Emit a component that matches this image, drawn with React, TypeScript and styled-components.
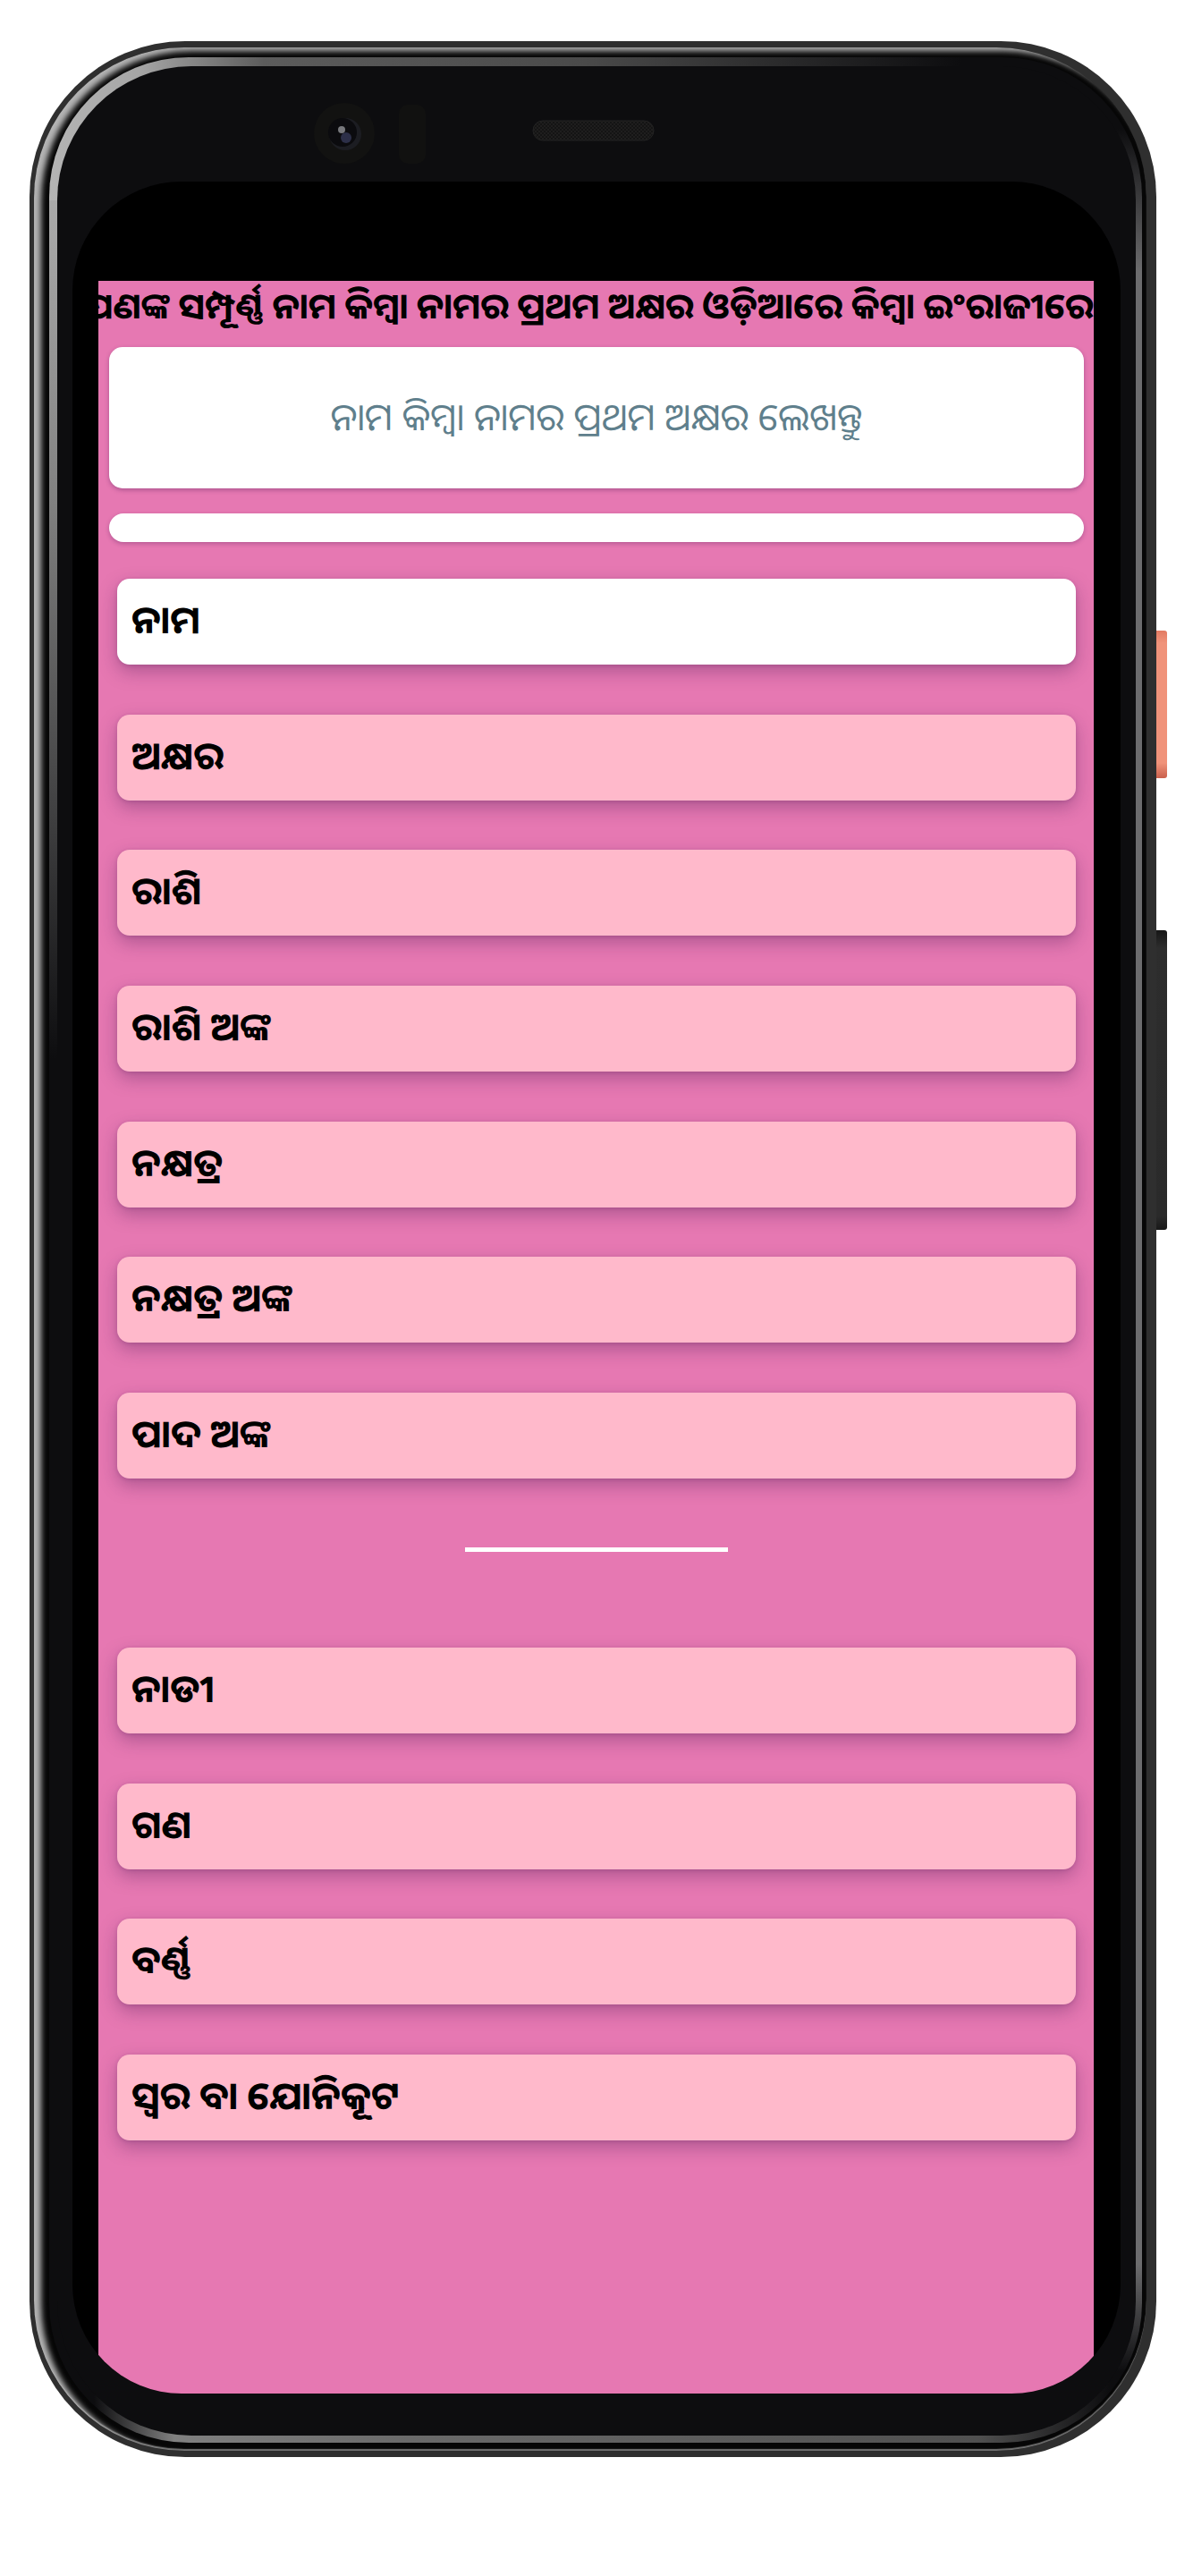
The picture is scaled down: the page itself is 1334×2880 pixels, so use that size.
import React from "react";
import styled, { createGlobalStyle } from "styled-components";

const Global = createGlobalStyle`
  * { box-sizing: border-box; }
  body { margin: 0; background: #fff; font-family: "Noto Sans Oriya", "Noto Sans", sans-serif; }
`;

const Page = styled.main`
  display: flex;
  justify-content: center;
  align-items: flex-start;
  padding: 46px 29px 133px 33px;
`;

const Edge = styled.div`
  flex: 1;
  min-width: 0;
  padding: 7px 11px 7px 5px;
  border-radius: 174px;
  background: #2f2f2f;
`;

const Chrome = styled.div`
  padding: 11px 5px 9px 17px;
  border-radius: 168px;
  background: #060606;
  box-shadow: inset 8px 4px 6px #b4b4b4, inset 0 -2px 1px #6e6e6e;
`;

/* Light reflected along the inner rim, fading out on each side. */
const Glint = styled.div`
  padding: 10px 7px 8px 9px;
  border-radius: 156px;
  background:
    linear-gradient(90deg, #b4b4b4 0, #a6a6a6 100px, #5c5c5c 240px, #4a4a4a 600px, transparent 1020px) left top / 100% 160px no-repeat,
    linear-gradient(90deg, transparent 50px, #808080 140px, #6a6a6a 400px, #505050 85%, transparent 97%) left bottom / 100% 100px no-repeat,
    linear-gradient(transparent 80px, #6c6c6e 240px, #6c6c6e calc(100% - 200px), transparent calc(100% - 80px)) right top / 100px 100% no-repeat,
    linear-gradient(#b4b4b4 0, #a6a6a6 200px, #808080 500px, transparent 1120px) left top / 160px 100% no-repeat,
    #0d0d0f;
`;

const Bezel = styled.div`
  padding: 129px 17px 47px 17px;
  border-radius: 150px;
  background: #0d0d0f;
  position: relative;
`;

const Screen = styled.div`
  padding: 111px 30px 0 29px;
  border-radius: 122px;
  background: #000;
  overflow: hidden;
`;

const Sensors = styled.svg`
  position: absolute;
  left: 280px;
  top: 30px;
  width: 440px;
  height: 100px;
`;

const SideKeys = styled.div`
  flex: none;
  display: flex;
  flex-direction: column;
  gap: 170px;
  width: 12px;
  padding-top: 659px;
`;

const SideKey = styled.div<{ $tall?: boolean }>`
  height: ${(p) => (p.$tall ? 335 : 165)}px;
  border-radius: 0 3px 3px 0;
  background: ${(p) =>
    p.$tall
      ? "linear-gradient(#161616, #2d2d2d 20px, #2a2a2a 320px, #181818)"
      : "linear-gradient(#e27a62, #f0937a 14px, #f0937a 148px, #c9604c)"};
`;

const AppView = styled.div`
  min-height: 2362px;
  background: #e678b2;
`;

const Ticker = styled.div`
  display: flex;
  justify-content: flex-end;
  height: 74px;
  overflow: hidden;
  white-space: nowrap;
`;

const TickerText = styled.h1`
  flex: none;
  margin: 0;
  font-size: 40px;
  line-height: 54px;
  font-weight: 700;
  color: #000;
`;

const Panels = styled.div`
  display: flex;
  flex-direction: column;
  gap: 28px;
  padding: 0 11px 0 12px;
`;

const NameInput = styled.input`
  width: 100%;
  height: 158px;
  padding: 0 16px 6px;
  border: 0;
  border-radius: 15px;
  background: #fff;
  box-shadow: 0 2px 5px rgba(70, 20, 80, 0.35);
  font-family: inherit;
  font-size: 42px;
  text-align: center;
  color: #000;
  &::placeholder { color: #5f7f8c; opacity: 1; }
`;

const Output = styled.output`
  display: block;
  height: 32px;
  border-radius: 16px;
  background: #fff;
  box-shadow: 0 2px 5px rgba(70, 20, 80, 0.3);
`;

const List = styled.ul<{ $height: number }>`
  display: flex;
  flex-direction: column;
  justify-content: space-between;
  min-height: ${(p) => p.$height}px;
  margin: 0;
  padding: 0 20px 0 21px;
  list-style: none;
`;

const Row = styled.li<{ $plain?: boolean }>`
  padding: 0 16px 6px;
  border-radius: 14px;
  background: ${(p) => (p.$plain ? "#fff" : "#ffb9cb")};
  box-shadow: 0 8px 20px rgba(80, 30, 90, 0.36), 0 1px 4px rgba(80, 30, 90, 0.2);
  font-size: 43px;
  line-height: 90px;
  font-weight: 700;
  color: #000;
`;

const Spacer = styled.div`
  height: 41px;
`;

const Divider = styled.hr`
  width: 294px;
  height: 5px;
  margin: 77px auto 107px;
  border: 0;
  background: #fff;
`;

const primary = ["ନାମ", "ଅକ୍ଷର", "ରାଶି", "ରାଶି ଅଙ୍କ", "ନକ୍ଷତ୍ର", "ନକ୍ଷତ୍ର ଅଙ୍କ", "ପାଦ ଅଙ୍କ"];
const secondary = ["ନାଡୀ", "ଗଣ", "ବର୍ଣ୍ଣ", "ସ୍ୱର ବା ଯୋନିକୂଟ"];
const prompt = "ନାମ କିମ୍ବା ନାମର ପ୍ରଥମ ଅକ୍ଷର ଲେଖନ୍ତୁ";

export default function App() {
  return (
    <>
      <Global />
      <Page>
        <Edge>
          <Chrome>
            <Glint>
              <Bezel>
                <Sensors viewBox="0 0 440 100" aria-hidden="true">
                  <defs>
                    <pattern id="mesh" width="4" height="4" patternUnits="userSpaceOnUse">
                      <rect width="4" height="4" fill="#141414" />
                      <circle cx="1" cy="1" r="0.8" fill="#2c2b29" />
                      <circle cx="3" cy="3" r="0.8" fill="#2c2b29" />
                    </pattern>
                  </defs>
                  <circle cx="41" cy="45" r="34" fill="#121211" />
                  <circle cx="42" cy="46" r="18" fill="#1c1d22" />
                  <circle cx="39" cy="44" r="16" fill="#0b0b0e" />
                  <circle cx="43" cy="50" r="6" fill="#2c2f48" />
                  <circle cx="38" cy="41" r="4" fill="#77787c" />
                  <rect x="102" y="13" width="30" height="66" rx="10" fill="#111110" />
                  <rect x="252" y="31" width="135" height="22" rx="11" fill="url(#mesh)" stroke="#232323" />
                </Sensors>
                <Screen>
                  <AppView>
                    <Ticker>
                      <TickerText>ଆପଣଙ୍କ ସମ୍ପୂର୍ଣ୍ଣ ନାମ କିମ୍ବା ନାମର ପ୍ରଥମ ଅକ୍ଷର ଓଡ଼ିଆରେ କିମ୍ବା ଇଂରାଜୀରେ</TickerText>
                    </Ticker>
                    <Panels>
                      <NameInput aria-label={prompt} placeholder={prompt} />
                      <Output />
                    </Panels>
                    <Spacer />
                    <List $height={1006}>
                      {primary.map((t, i) => (
                        <Row key={t} $plain={i === 0}>{t}</Row>
                      ))}
                    </List>
                    <Divider />
                    <List $height={551}>
                      {secondary.map((t) => (
                        <Row key={t}>{t}</Row>
                      ))}
                    </List>
                  </AppView>
                </Screen>
              </Bezel>
            </Glint>
          </Chrome>
        </Edge>
        <SideKeys>
          <SideKey />
          <SideKey $tall />
        </SideKeys>
      </Page>
    </>
  );
}
